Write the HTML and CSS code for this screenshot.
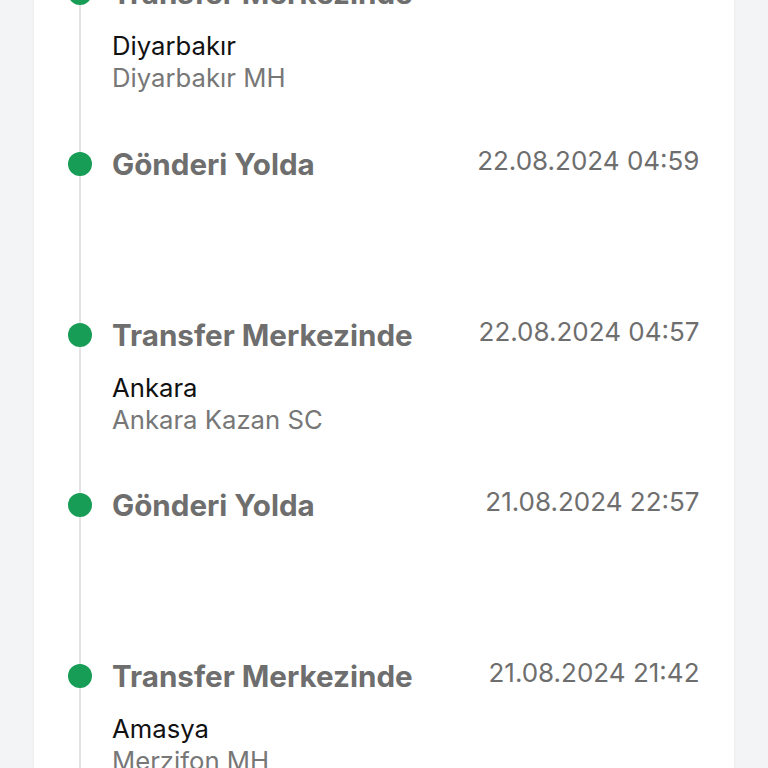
FILE: index.html
```html
<!DOCTYPE html>
<html lang="tr">
<head>
<meta charset="utf-8">
<link rel="stylesheet" href="styles.css">
</head>
<body>
<main class="page">
  <section class="card">
    <ol class="timeline">
      <li class="event">
        <div class="event-head">
          <span class="dot"></span>
          <span class="title">Transfer Merkezinde</span>
          <span class="date">22.08.2024 06:12</span>
        </div>
        <div class="place">
          <div class="city">Diyarbakır</div>
          <div class="branch">Diyarbakır MH</div>
        </div>
      </li>
      <li class="event">
        <div class="event-head">
          <span class="dot"></span>
          <span class="title">Gönderi Yolda</span>
          <span class="date">22.08.2024 04:59</span>
        </div>
      </li>
      <li class="event">
        <div class="event-head">
          <span class="dot"></span>
          <span class="title">Transfer Merkezinde</span>
          <span class="date">22.08.2024 04:57</span>
        </div>
        <div class="place">
          <div class="city">Ankara</div>
          <div class="branch">Ankara Kazan SC</div>
        </div>
      </li>
      <li class="event">
        <div class="event-head">
          <span class="dot"></span>
          <span class="title">Gönderi Yolda</span>
          <span class="date">21.08.2024 22:57</span>
        </div>
      </li>
      <li class="event">
        <div class="event-head">
          <span class="dot"></span>
          <span class="title">Transfer Merkezinde</span>
          <span class="date">21.08.2024 21:42</span>
        </div>
        <div class="place">
          <div class="city">Amasya</div>
          <div class="branch">Merzifon MH</div>
        </div>
      </li>
    </ol>
  </section>
</main>
</body>
</html>
```
FILE: styles.css
```css
* { box-sizing: border-box; }
html, body {
  margin: 0;
  padding: 0;
  background: #f3f4f6;
  font-family: Inter, "Noto Sans", sans-serif;
  overflow: hidden;
  height: 768px;
}
.page {
  padding: 0 34px;
}
.card {
  background: #ffffff;
  box-shadow: 0 0 3px rgba(0,0,0,0.06);
  margin-top: -40.67px;
  padding: 0 35px 0 0;
}
.timeline {
  list-style: none;
  margin: 0;
  padding: 0;
  position: relative;
}
.timeline::before {
  content: "";
  position: absolute;
  left: 45px;
  top: 0;
  bottom: 0;
  width: 2px;
  background: #e3e3e3;
}
.event {
  height: 170.67px;
  padding-top: 16px;
}
.event-head {
  display: flex;
  align-items: center;
  gap: 20px;
  height: 36px;
  padding-left: 34px;
}
.dot {
  flex: none;
  position: relative;
  width: 24px;
  height: 24px;
  border-radius: 50%;
  background: #179d55;
}
.title {
  flex: 1;
  font-size: 29.6px;
  font-weight: 680;
  color: #6e6e6e;
  white-space: nowrap;
}
.date {
  align-self: flex-start;
  font-size: 26px;
  line-height: 30px;
  color: #6e6e6e;
  white-space: nowrap;
  margin-right: -0.5px;
}
.place {
  margin-left: 78px;
  margin-top: 19px;
}
.city, .branch {
  font-size: 25.7px;
  line-height: 32px;
}
.city { color: #111111; }
.branch { color: #777777; }
```
